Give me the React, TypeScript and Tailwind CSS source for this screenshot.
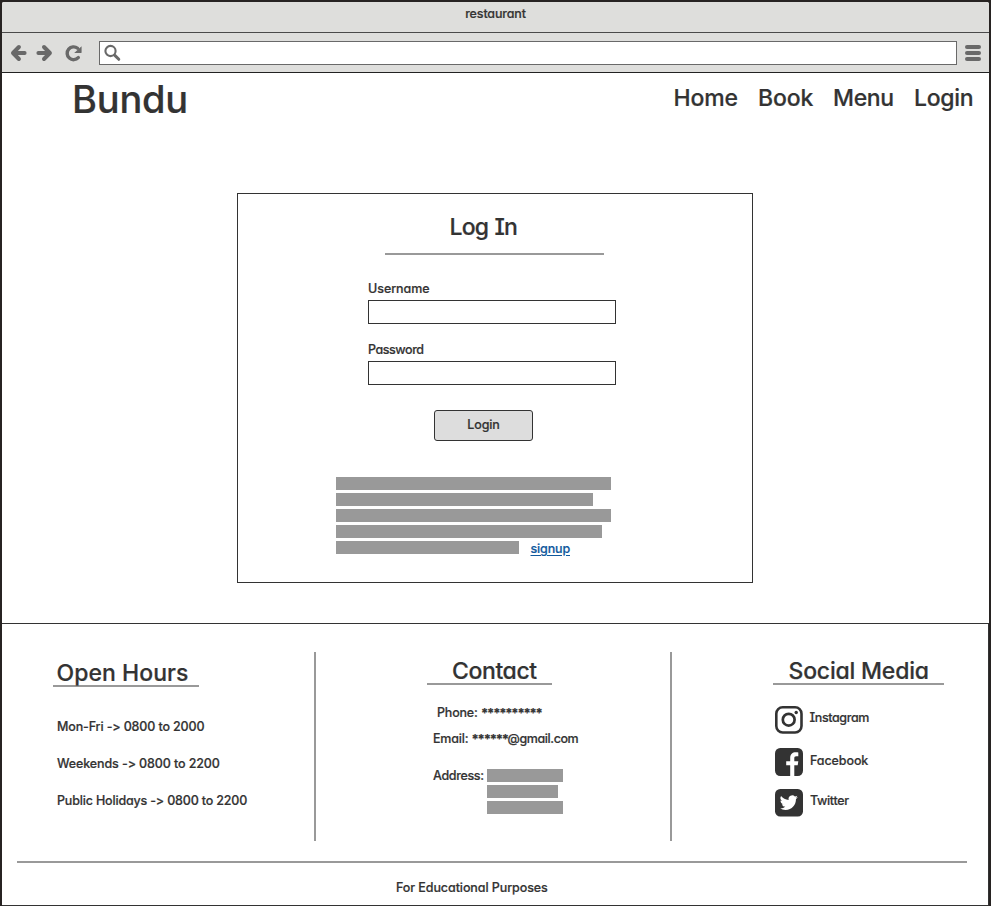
import type { ReactNode } from "react";

function Label({ children, className = "" }: { children: ReactNode; className?: string }) {
  return (
    <span className={`-mb-px block text-[12.5px] leading-[17px] whitespace-pre ${className}`}>{children}</span>
  );
}

function Heading({ children, className = "" }: { children: ReactNode; className?: string }) {
  return (
    <h2 className={`-mb-0.5 text-[23px] leading-[30px] whitespace-pre ${className}`}>{children}</h2>
  );
}

function Rule({ className }: { className: string }) {
  return <div className={`h-0.5 shrink-0 bg-[#999999] ${className}`} />;
}

function Bar({ className }: { className: string }) {
  return <div className={`h-[13px] bg-[#999999] ${className}`} />;
}

function BackIcon() {
  return (
    <svg width="17" height="18" viewBox="0 0 17 18" fill="none" stroke="#696969" strokeWidth="4" strokeLinecap="round" strokeLinejoin="round">
      <path d="M8.9 3 3 9l5.9 6M3.8 9h10.8" />
    </svg>
  );
}

function ForwardIcon() {
  return (
    <svg width="17" height="18" viewBox="0 0 17 18" fill="none" stroke="#696969" strokeWidth="4" strokeLinecap="round" strokeLinejoin="round">
      <path d="M8 3l5.9 6L8 15M13.1 9H2.4" />
    </svg>
  );
}

function ReloadIcon() {
  return (
    <svg width="18" height="18" viewBox="0 0 18 18">
      <path d="M13.3 13.6A6.4 6.4 0 1 1 12.6 4.3" fill="none" stroke="#696969" strokeWidth="3.4" strokeLinecap="round" />
      <path d="M16.6 2.2v6a.9.9 0 0 1-.9.9H9.2z" fill="#696969" />
    </svg>
  );
}

function SearchIcon() {
  return (
    <svg width="17" height="18" viewBox="0 0 17 18" fill="none" stroke="#696969" strokeLinecap="round">
      <circle cx="6.5" cy="7" r="5.1" strokeWidth="2.1" />
      <path d="M10.8 11.4l4 3.9" strokeWidth="3" />
    </svg>
  );
}

function InstagramIcon() {
  return (
    <svg width="28" height="28" viewBox="0 0 28 28">
      <rect x="1.3" y="1.3" width="25.2" height="25.2" rx="6.4" fill="none" stroke="#333333" strokeWidth="2.6" />
      <circle cx="13.7" cy="13.7" r="5.9" fill="none" stroke="#333333" strokeWidth="2.7" />
      <circle cx="21.2" cy="6.5" r="1.7" fill="#333333" />
    </svg>
  );
}

function FacebookIcon() {
  return (
    <svg width="28" height="28" viewBox="0 0 28 28">
      <rect width="28" height="28" rx="5.2" fill="#333333" />
      <path d="M15.2 28V17.2h-4v-3.9h4v-3.2c0-3.9 2.3-5.8 5.6-5.8 1.2 0 2.1.1 2.5.2v3.7h-1.9c-1.8 0-2.1.9-2.1 2.1v3h4l-.6 3.9h-3.4V28z" fill="#ffffff" />
    </svg>
  );
}

function TwitterIcon() {
  return (
    <svg width="28" height="28" viewBox="0 0 28 28">
      <rect width="28" height="27.5" rx="5.2" fill="#333333" />
      <path transform="translate(4.8 4.7) scale(.75)" d="M23.95 4.57a10 10 0 0 1-2.82.77 4.96 4.96 0 0 0 2.16-2.72c-.95.56-2 .96-3.13 1.19a4.92 4.92 0 0 0-8.38 4.48C7.69 8.09 4.07 6.13 1.64 3.16a4.92 4.92 0 0 0 1.52 6.57 4.9 4.9 0 0 1-2.23-.61v.06a4.92 4.92 0 0 0 3.95 4.83 5 5 0 0 1-2.21.08 4.94 4.94 0 0 0 4.6 3.42A9.87 9.87 0 0 1 0 19.54a14 14 0 0 0 7.55 2.21c9.05 0 14-7.5 14-13.98 0-.21 0-.42-.02-.63a9.94 9.94 0 0 0 2.46-2.55z" fill="#ffffff" />
    </svg>
  );
}

function BrowserBar() {
  return (
    <div className="bg-[#dededc]">
      <div className="flex h-[31px] justify-center border-b border-[#4a4a4a] pt-[3px]">
        <Label className="tracking-[-0.15px]">restaurant</Label>
      </div>
      <div className="flex h-10 items-center border-b border-[#222222] pl-2">
        <div className="flex items-center">
          <BackIcon />
          <div className="ml-[9px]"><ForwardIcon /></div>
          <div className="ml-3"><ReloadIcon /></div>
        </div>
        <div className="ml-4 flex h-6 w-[858px] items-center border border-[#696969] bg-white pl-1">
          <SearchIcon />
        </div>
        <div className="ml-2 flex flex-col gap-0.5">
          <div className="h-1 w-4 rounded-full bg-[#696969]" />
          <div className="h-1 w-4 rounded-full bg-[#696969]" />
          <div className="h-1 w-4 rounded-full bg-[#696969]" />
        </div>
      </div>
    </div>
  );
}

function SiteHeader() {
  return (
    <header className="flex items-start justify-between pr-3 pl-[70px]">
      <h1 className="pt-[3px] text-[38px] leading-[46px] tracking-[-0.2px]">Bundu</h1>
      <nav className="flex pt-2.5">
        <Heading className="w-[84.5px] tracking-[-0.15px]">Home</Heading>
        <Heading className="w-[75px] tracking-[-0.1px]">Book</Heading>
        <Heading className="w-[81px] tracking-[-0.35px]">Menu</Heading>
        <Heading className="w-[63px] tracking-[-0.3px]">Login</Heading>
      </nav>
    </header>
  );
}

function LoginCard() {
  return (
    <section className="mt-[71px] ml-[235px] h-[390px] w-[516px] border border-[#333333]">
      <Heading className="mt-[18px] ml-[211.5px] tracking-[-0.85px] [word-spacing:1px]">Log In</Heading>
      <Rule className="mt-[13px] ml-[147px] w-[219px]" />
      <div className="ml-[130px] w-[248px]">
        <Label className="mt-[25px] tracking-[-0.05px]">Username</Label>
        <div className="mt-1 h-6 border border-[#333333] bg-white" />
        <Label className="mt-[17px] tracking-[-0.45px]">Password</Label>
        <div className="mt-1 h-6 border border-[#333333] bg-white" />
        <div className="mt-[25px] ml-[66px] flex h-[31px] w-[99px] justify-center rounded-[3px] border border-[#333333] bg-[#dddddd] pt-[5px]">
          <Label className="tracking-[-0.1px]">Login</Label>
        </div>
      </div>
      <div className="mt-9 ml-[98px] flex flex-col gap-[3px]">
        <Bar className="w-[275px]" />
        <Bar className="w-[257px]" />
        <Bar className="w-[275px]" />
        <Bar className="w-[266px]" />
        <div className="flex h-[13px]">
          <Bar className="w-[183px]" />
          <Label className="-mt-px ml-[11.5px] tracking-[-0.15px] text-[#10599d] underline underline-offset-2">signup</Label>
        </div>
      </div>
    </section>
  );
}

function OpenHours() {
  return (
    <section className="w-[312px] pt-[34px]">
      <Heading className="ml-[54.5px] tracking-[0.05px]">Open Hours</Heading>
      <Rule className="-mt-[3px] ml-[51px] w-[146px]" />
      <div className="mt-[31px] ml-[55px] flex flex-col gap-[21px]">
        <Label className="tracking-[-0.14px]">{"Mon-Fri -> 0800 to 2000"}</Label>
        <Label className="tracking-[-0.11px]">{"Weekends -> 0800 to 2200"}</Label>
        <Label className="tracking-[-0.17px]">{"Public Holidays -> 0800 to 2200"}</Label>
      </div>
    </section>
  );
}

function Contact() {
  return (
    <section className="w-[354px] pt-8">
      <Heading className="ml-[136px] tracking-[-0.4px]">Contact</Heading>
      <Rule className="-mt-[3px] ml-[111px] w-[125px]" />
      <div className="mt-[19px] ml-[121px] flex h-[26px]">
        <Label className="w-11 tracking-[-0.2px]">Phone:</Label>
        <Label className="pt-px text-[13px] font-bold tracking-[-1.2px]">**********</Label>
      </div>
      <div className="ml-[117px] flex h-[37px]">
        <Label className="w-[38.5px] tracking-[-0.2px]">Email:</Label>
        <Label className="w-[36px] pt-px text-[13px] font-bold tracking-[-1.2px]">******</Label>
        <Label className="tracking-[-0.4px]">@gmail.com</Label>
      </div>
      <div className="ml-[117px] flex">
        <Label className="w-[54px] tracking-[-0.35px]">Address:</Label>
        <div className="mt-0.5 flex flex-col gap-[3px]">
          <Bar className="w-[76px]" />
          <Bar className="w-[71px]" />
          <Bar className="w-[76px]" />
        </div>
      </div>
    </section>
  );
}

function SocialMedia() {
  return (
    <section className="grow pt-8">
      <Heading className="ml-[116.5px] tracking-[-0.2px]">Social Media</Heading>
      <Rule className="-mt-[3px] ml-[101px] w-[171px]" />
      <div className="mt-[21px] ml-[103px] flex h-[42px] gap-1.5">
        <InstagramIcon />
        <Label className="mt-[3px] ml-[0.5px] tracking-[-0.38px]">Instagram</Label>
      </div>
      <div className="ml-[103px] flex h-[41px] gap-[7px]">
        <FacebookIcon />
        <Label className="mt-1 tracking-[-0.1px]">Facebook</Label>
      </div>
      <div className="ml-[103px] flex gap-[7px]">
        <TwitterIcon />
        <Label className="mt-[3px] tracking-[-0.35px]">Twitter</Label>
      </div>
    </section>
  );
}

function SiteFooter() {
  return (
    <footer className="mt-10 flex h-[283px] flex-col border-t border-r border-b border-[#333333]">
      <div className="flex h-[217px]">
        <OpenHours />
        <div className="mt-7 w-0.5 shrink-0 bg-[#999999]" />
        <Contact />
        <div className="mt-7 w-0.5 shrink-0 bg-[#999999]" />
        <SocialMedia />
      </div>
      <Rule className="mt-5 ml-[15px] w-[950px]" />
      <Label className="mt-4 ml-[394px] tracking-[-0.08px]">For Educational Purposes</Label>
    </footer>
  );
}

export default function App() {
  return (
    <div className="h-[906px] w-[991px] overflow-hidden bg-[#272322]">
      <div className="h-[906px] overflow-hidden rounded-t-[4px] border-x-2 border-t-2 border-[#272322] bg-white font-['Inter',sans-serif] font-medium text-[#333333] [-webkit-text-stroke:0.2px] [font-feature-settings:'cv11','cv08','calt'_0]">
        <BrowserBar />
        <SiteHeader />
        <LoginCard />
        <SiteFooter />
      </div>
    </div>
  );
}
